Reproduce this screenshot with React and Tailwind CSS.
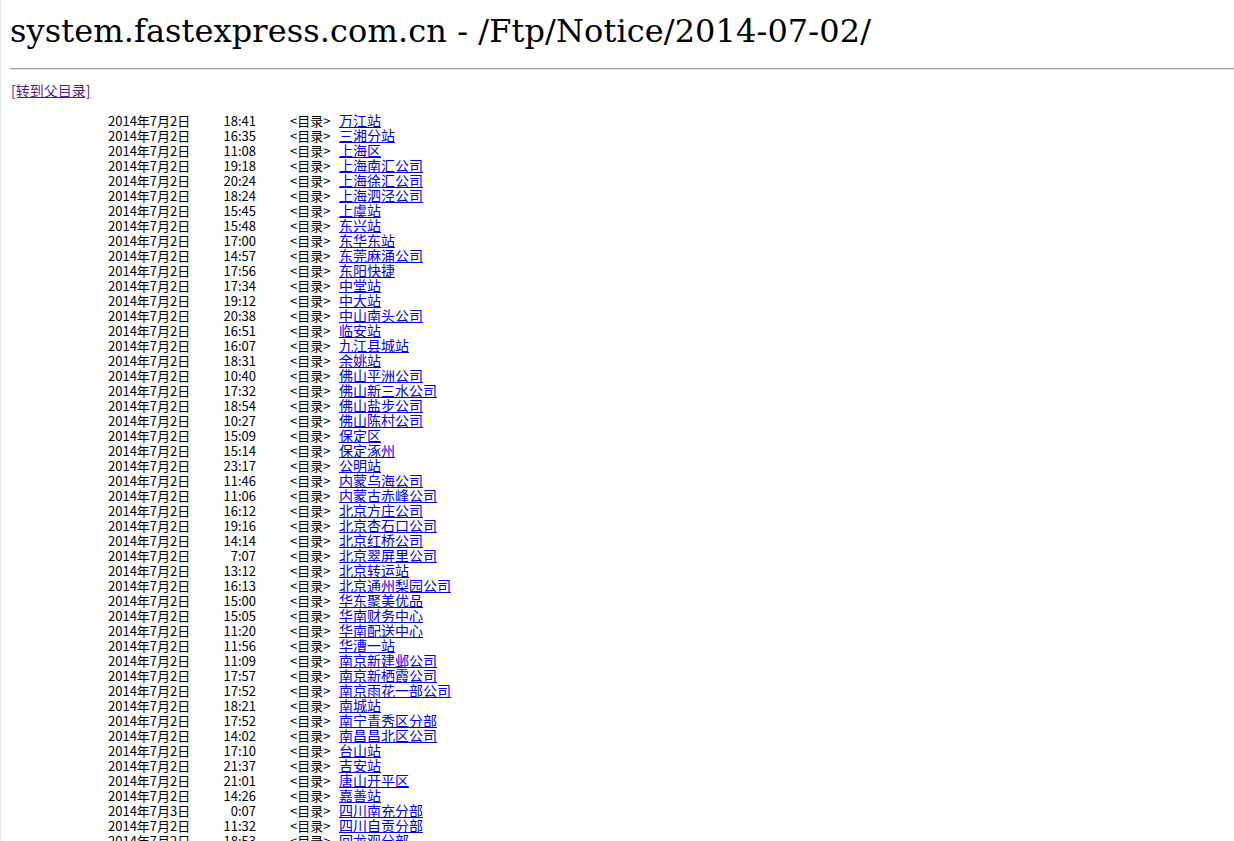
const rows = [
  ['2014年7月2日', '18:41', '万江站'],
  ['2014年7月2日', '16:35', '三湘分站'],
  ['2014年7月2日', '11:08', '上海区'],
  ['2014年7月2日', '19:18', '上海南汇公司'],
  ['2014年7月2日', '20:24', '上海徐汇公司'],
  ['2014年7月2日', '18:24', '上海泗泾公司'],
  ['2014年7月2日', '15:45', '上虞站'],
  ['2014年7月2日', '15:48', '东兴站'],
  ['2014年7月2日', '17:00', '东华东站'],
  ['2014年7月2日', '14:57', '东莞麻涌公司'],
  ['2014年7月2日', '17:56', '东阳快捷'],
  ['2014年7月2日', '17:34', '中堂站'],
  ['2014年7月2日', '19:12', '中大站'],
  ['2014年7月2日', '20:38', '中山南头公司'],
  ['2014年7月2日', '16:51', '临安站'],
  ['2014年7月2日', '16:07', '九江县城站'],
  ['2014年7月2日', '18:31', '余姚站'],
  ['2014年7月2日', '10:40', '佛山平洲公司'],
  ['2014年7月2日', '17:32', '佛山新三水公司'],
  ['2014年7月2日', '18:54', '佛山盐步公司'],
  ['2014年7月2日', '10:27', '佛山陈村公司'],
  ['2014年7月2日', '15:09', '保定区'],
  ['2014年7月2日', '15:14', '保定涿州'],
  ['2014年7月2日', '23:17', '公明站'],
  ['2014年7月2日', '11:46', '内蒙乌海公司'],
  ['2014年7月2日', '11:06', '内蒙古赤峰公司'],
  ['2014年7月2日', '16:12', '北京方庄公司'],
  ['2014年7月2日', '19:16', '北京杏石口公司'],
  ['2014年7月2日', '14:14', '北京红桥公司'],
  ['2014年7月2日', '7:07', '北京翠屏里公司'],
  ['2014年7月2日', '13:12', '北京转运站'],
  ['2014年7月2日', '16:13', '北京通州梨园公司'],
  ['2014年7月2日', '15:00', '华东聚美优品'],
  ['2014年7月2日', '15:05', '华南财务中心'],
  ['2014年7月2日', '11:20', '华南配送中心'],
  ['2014年7月2日', '11:56', '华漕一站'],
  ['2014年7月2日', '11:09', '南京新建邺公司'],
  ['2014年7月2日', '17:57', '南京新栖霞公司'],
  ['2014年7月2日', '17:52', '南京雨花一部公司'],
  ['2014年7月2日', '18:21', '南城站'],
  ['2014年7月2日', '17:52', '南宁青秀区分部'],
  ['2014年7月2日', '14:02', '南昌昌北区公司'],
  ['2014年7月2日', '17:10', '台山站'],
  ['2014年7月2日', '21:37', '吉安站'],
  ['2014年7月2日', '21:01', '唐山开平区'],
  ['2014年7月2日', '14:26', '嘉善站'],
  ['2014年7月3日', '0:07', '四川南充分部'],
  ['2014年7月2日', '11:32', '四川自贡分部'],
  ['2014年7月2日', '18:53', '回龙观分部'],
]

export default function App() {
  return (
    <div className="h-[841px] overflow-hidden bg-white text-black border-l border-[#e3e3e3] pl-[8px] pt-[8px]">
      {/* Title */}
      <h1
        className="h-[44px] leading-[46px] text-[32px] tracking-[0.1px] whitespace-nowrap pl-[1px]"
        style={{ fontFamily: '"DejaVu Serif", "Noto Sans CJK SC", serif' }}
      >
        system.fastexpress.com.cn - /Ftp/Notice/2014-07-02/
      </h1>

      <div className="mt-[16px] ml-[1px] h-[2px] border-t border-[#9a9a9a] border-b border-b-[#e6e6e6]" />

      {/* Listing */}
      <div
        className="mt-[13px] text-[13px] leading-[15px] whitespace-nowrap"
        style={{ fontFamily: '"Noto Sans CJK SC", "Liberation Sans", sans-serif' }}
      >
        <div className="h-[15px] pl-[2px]">
          <a href="#" className="text-[14px] text-[#551a8b] underline">[转到父目录]</a>
        </div>
        <div className="h-[15px]" />
        {rows.map(([date, time, name], i) => (
          <div key={i} className="flex h-[15px] pl-[99px]">
            <span className="w-[113px]">{date}</span>
            <span className="w-[35px] text-right">{time}</span>
            <span className="ml-[34px] w-[49px]">&lt;目录&gt;</span>
            <a href="#" className="text-[14px] text-[#0000ee] underline">{name}</a>
          </div>
        ))}
      </div>
    </div>
  )
}
